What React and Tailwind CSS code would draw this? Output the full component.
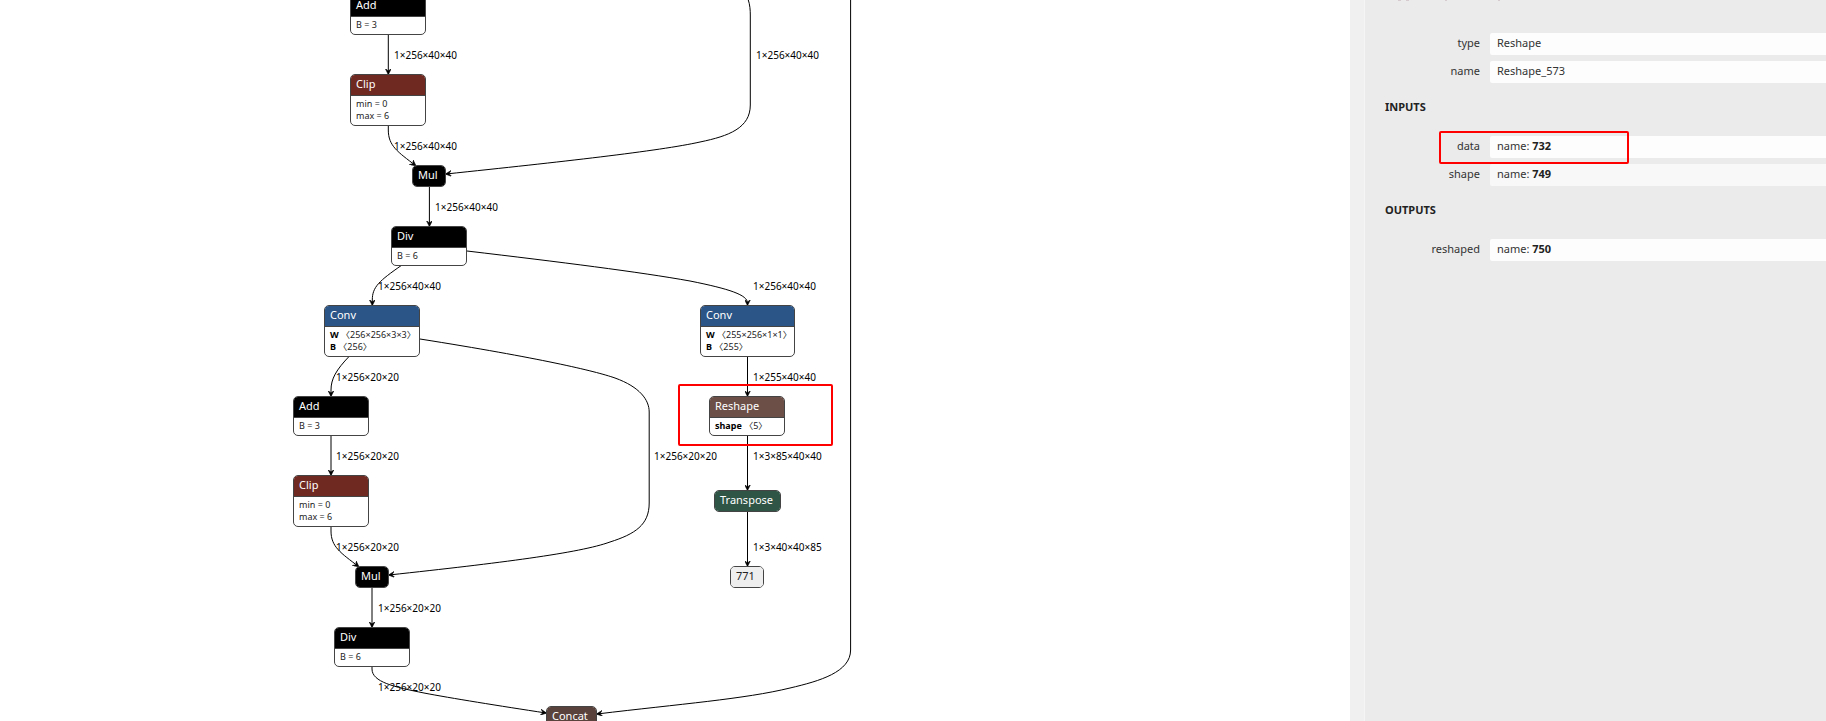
const FONT = "font-['Noto_Sans','Noto_Sans_CJK_SC',sans-serif]";

const nodes = [
  { id: "add-1", title: "Add", color: "bg-black", place: "left-[350px] -top-[5px] w-[76px]", rows: ["B = 3"] },
  { id: "clip-1", title: "Clip", color: "bg-[#702921]", place: "left-[350px] top-[74px] w-[76px]", rows: ["min = 0", "max = 6"] },
  { id: "mul-1", title: "Mul", color: "bg-black", place: "left-[412px] top-[165px] w-[34px]" },
  { id: "div-1", title: "Div", color: "bg-black", place: "left-[391px] top-[226px] w-[76px]", rows: ["B = 6"] },
  { id: "conv-1", title: "Conv", color: "bg-[#2b5586]", place: "left-[324px] top-[305px] w-[96px]", tensors: [["W", "256×256×3×3"], ["B", "256"]] },
  { id: "add-2", title: "Add", color: "bg-black", place: "left-[293px] top-[396px] w-[76px]", rows: ["B = 3"] },
  { id: "clip-2", title: "Clip", color: "bg-[#702921]", place: "left-[293px] top-[475px] w-[76px]", rows: ["min = 0", "max = 6"] },
  { id: "mul-2", title: "Mul", color: "bg-black", place: "left-[355px] top-[566px] w-[34px]" },
  { id: "div-2", title: "Div", color: "bg-black", place: "left-[334px] top-[627px] w-[76px]", rows: ["B = 6"] },
  { id: "concat", title: "Concat", color: "bg-[#59423b]", place: "left-[546px] top-[706px] w-[51px]" },
  { id: "conv-2", title: "Conv", color: "bg-[#2b5586]", place: "left-[700px] top-[305px] w-[95px]", tensors: [["W", "255×256×1×1"], ["B", "255"]] },
  { id: "reshape", title: "Reshape", color: "bg-[#6c4f47]", place: "left-[709px] top-[396px] w-[76px]", tensors: [["shape", "5"]] },
  { id: "transpose", title: "Transpose", color: "bg-[#2f5546]", place: "left-[714px] top-[490px] w-[67px]" },
  { id: "output", title: "771", color: "bg-[#eeeeee]", text: "text-[#222222]", place: "left-[730px] top-[566px] w-[34px]" },
];

const labels = [
  ["left-[394px] top-[47px]", "1×256×40×40"],
  ["left-[394px] top-[138px]", "1×256×40×40"],
  ["left-[435px] top-[199px]", "1×256×40×40"],
  ["left-[378px] top-[278px]", "1×256×40×40"],
  ["left-[336px] top-[369px]", "1×256×20×20"],
  ["left-[336px] top-[448px]", "1×256×20×20"],
  ["left-[336px] top-[539px]", "1×256×20×20"],
  ["left-[378px] top-[600px]", "1×256×20×20"],
  ["left-[378px] top-[679px]", "1×256×20×20"],
  ["left-[654px] top-[448px]", "1×256×20×20"],
  ["left-[756px] top-[47px]", "1×256×40×40"],
  ["left-[753px] top-[278px]", "1×256×40×40"],
  ["left-[753px] top-[369px]", "1×255×40×40"],
  ["left-[753px] top-[448px]", "1×3×85×40×40"],
  ["left-[753px] top-[539px]", "1×3×40×40×85"],
];

const edges = [
  "M388.3 34V74",
  "M388.3 125V130C388.3 146 398 152 415.5 165.5",
  "M748 -1C750 5 750.3 10 750.3 15V105C750.3 128 729 136 700 142C660 151 560 162 446 174",
  "M429.4 187V226",
  "M402 265C379 281 372.3 287 372.3 300V305",
  "M467 251C560 262 640 272 690 281C730 289 747.5 295 747.5 303V305",
  "M349.5 356C336 370 331 379 331 390V396",
  "M420 339C540 358 595 371 615 378C640 387 649.2 400 649.2 412V503C649.2 525 635 534 610 542C580 553 500 563 389 575",
  "M331 435V475",
  "M331 526V531C331 547 341 553 358.5 566.5",
  "M372 588V627",
  "M372 666V669C372 682 394 687 424 693C450 698 500 706 546 713",
  "M850.6 0V650C850.6 672 820 681 790 688C745 699 680 704 597 714",
  "M747.5 356V396",
  "M747.5 435V490",
  "M747.5 512V566",
];

function GraphNode({ title, color, text = "text-white", place, rows, tensors }) {
  const hasBody = rows || tensors;
  return (
    <section className={`absolute overflow-hidden rounded-[5px] border border-[#444444] bg-white ${place}`}>
      <h3 className={`h-5 pl-[5px] text-[11px] leading-[18px] ${color} ${text}`}>{title}</h3>
      {hasBody && (
        <div className="border-t border-[#444444] pt-0.5 pb-[3px] pl-[5px] text-[9px] leading-3 whitespace-nowrap text-[#222222]">
          {rows?.map((row) => <p key={row}>{row}</p>)}
          {tensors?.map(([name, shape]) => (
            <p key={name}>
              <b className="text-black">{name}</b>
              {" "}〈{shape}〉
            </p>
          ))}
        </div>
      )}
    </section>
  );
}

function Graph() {
  return (
    <main className="relative min-w-0 flex-1 overflow-hidden bg-white">
      <svg className="absolute top-0 left-0 h-full w-full" fill="none" stroke="#000000" strokeWidth="1" aria-hidden="true">
        <defs>
          <marker id="arrow" viewBox="0 0 10 10" refX="9" refY="5" markerUnits="userSpaceOnUse" markerWidth="6" markerHeight="6" orient="auto">
            <path d="M0 0L10 5L0 10L4 5z" fill="#000000" />
          </marker>
        </defs>
        {edges.map((d) => <path key={d} d={d} markerEnd="url(#arrow)" />)}
      </svg>
      {nodes.map((node) => <GraphNode key={node.id} {...node} />)}
      {labels.map(([place, label]) => (
        <span key={place} className={`absolute text-[10px] leading-4 whitespace-nowrap text-black ${place}`}>{label}</span>
      ))}
      <div className="absolute top-[384px] left-[678px] h-[62px] w-[155px] rounded-xs border-2 border-[#ff0000]" />
    </main>
  );
}

function Property({ label, value, connection, muted, marked }) {
  return (
    <div className="relative flex text-[11px] leading-5 text-[#333333]">
      <dt className="w-[95px] shrink-0 text-right">{label}</dt>
      <dd className={`ml-2.5 h-[22px] flex-1 rounded-l-xs pl-[7px] ${muted ? "bg-[#f8f8f8]" : "bg-[#fdfdfd]"}`}>
        {connection ? <>name: <b className="text-[#222222]">{connection}</b></> : value}
      </dd>
      {marked && <div className="absolute -top-[5px] left-[54px] z-10 h-[33px] w-[190px] rounded-xs border-2 border-[#ff0000]" />}
    </div>
  );
}

function Heading({ children }) {
  return <h2 className="mt-4 mb-[21px] text-[11px] leading-4 font-bold text-[#222222]">{children}</h2>;
}

export default function App() {
  return (
    <div className={`flex h-screen overflow-hidden bg-white ${FONT}`}>
      <Graph />
      <aside className="flex w-[476px] shrink-0 bg-[#f0f0f0]">
        <div className="ml-3.5 flex-1 border-l border-[#f5f5f5] bg-[#ebebeb] pl-5">
          <svg className="mb-8 block h-px w-[120px]" fill="#d6cccf" aria-hidden="true">
            <path d="M13 0h3v1h-3zM21 0h3v1h-3zM60 0h2v1h-2zM113 0h2v1h-2z" />
          </svg>
          <dl className="flex flex-col gap-1.5">
            <Property label="type" value="Reshape" />
            <Property label="name" value="Reshape_573" />
          </dl>
          <Heading>INPUTS</Heading>
          <dl className="flex flex-col gap-1.5">
            <Property label="data" connection="732" marked />
            <Property label="shape" connection="749" muted />
          </dl>
          <Heading>OUTPUTS</Heading>
          <dl className="flex flex-col gap-1.5">
            <Property label="reshaped" connection="750" />
          </dl>
        </div>
      </aside>
    </div>
  );
}
